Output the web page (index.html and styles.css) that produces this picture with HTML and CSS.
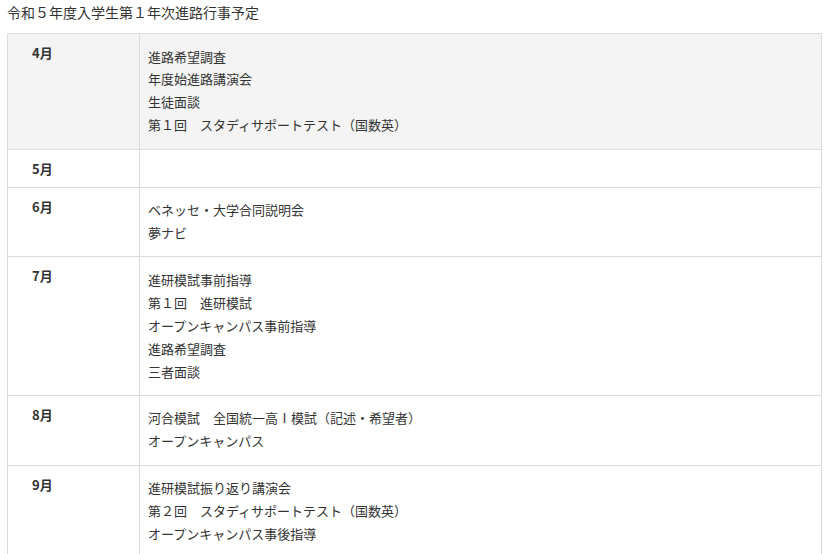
FILE: index.html
```html
<!DOCTYPE html>
<html lang="ja">
<head>
<meta charset="utf-8">
<link rel="stylesheet" href="styles.css">
</head>
<body>
<div class="page">
  <h2 class="title">令和５年度入学生第１年次進路行事予定</h2>
  <table class="schedule">
    <tr class="shade">
      <th>4月</th>
      <td>進路希望調査<br>年度始進路講演会<br>生徒面談<br>第１回　スタディサポートテスト（国数英）</td>
    </tr>
    <tr>
      <th>5月</th>
      <td></td>
    </tr>
    <tr>
      <th>6月</th>
      <td>ベネッセ・大学合同説明会<br>夢ナビ</td>
    </tr>
    <tr>
      <th>7月</th>
      <td>進研模試事前指導<br>第１回　進研模試<br>オープンキャンパス事前指導<br>進路希望調査<br>三者面談</td>
    </tr>
    <tr>
      <th>8月</th>
      <td>河合模試　全国統一高Ⅰ模試（記述・希望者）<br>オープンキャンパス</td>
    </tr>
    <tr>
      <th>9月</th>
      <td>進研模試振り返り講演会<br>第２回　スタディサポートテスト（国数英）<br>オープンキャンパス事後指導</td>
    </tr>
  </table>
</div>
</body>
</html>
```

FILE: styles.css
```css
html, body {
  margin: 0;
  padding: 0;
  background: #fff;
}
body {
  font-family: "Noto Sans CJK JP", "Noto Sans", sans-serif;
  color: #333;
}
.page {
  padding: 2px 14px 0 7px;
}
.title {
  margin: 0 0 11px 0;
  font-size: 14px;
  font-weight: normal;
  line-height: 20px;
  color: #333;
}
.schedule {
  width: 815px;
  border-collapse: collapse;
  font-size: 13px;
}
.schedule th,
.schedule td {
  border: 1px solid #dcdcdc;
  vertical-align: top;
  text-align: left;
}
.schedule th {
  width: 107px;
  padding: 9px 0 8px 24px;
  font-weight: bold;
  line-height: 20px;
}
.schedule td {
  padding: 11.5px 9px 11.5px 8px;
  line-height: 22.9px;
}
.shade th,
.shade td {
  background: #f4f4f4;
}
```
